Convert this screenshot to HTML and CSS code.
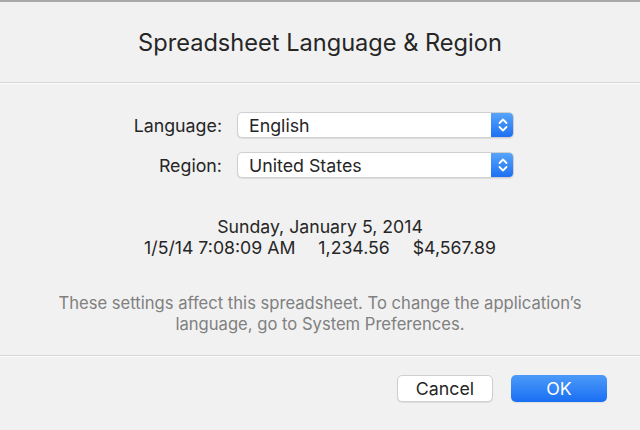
FILE: index.html
```html
<!DOCTYPE html>
<html>
<head>
<meta charset="utf-8">
<link rel="stylesheet" href="styles.css">
</head>
<body>
<div class="dialog">
  <header class="header">
    <h1 class="title">Spreadsheet Language &amp; Region</h1>
  </header>
  <main class="content">
    <div class="form">
      <label class="label">Language:</label>
      <div class="popup">
        <span class="popup-value">English</span>
        <span class="stepper">
          <svg width="12" height="18" viewBox="0 0 12 18"><path d="M2.5 7 L6 3.5 L9.5 7 M2.5 11 L6 14.5 L9.5 11" fill="none" stroke="#fff" stroke-width="1.8" stroke-linecap="round" stroke-linejoin="round"/></svg>
        </span>
      </div>
      <label class="label">Region:</label>
      <div class="popup">
        <span class="popup-value">United States</span>
        <span class="stepper">
          <svg width="12" height="18" viewBox="0 0 12 18"><path d="M2.5 7 L6 3.5 L9.5 7 M2.5 11 L6 14.5 L9.5 11" fill="none" stroke="#fff" stroke-width="1.8" stroke-linecap="round" stroke-linejoin="round"/></svg>
        </span>
      </div>
    </div>
    <div class="preview">
      <div>Sunday, January 5, 2014</div>
      <div class="preview-row"><span>1/5/14 7:08:09 AM</span><span>1,234.56</span><span>$4,567.89</span></div>
    </div>
    <p class="note">These settings affect this spreadsheet. To change the application’s language, go to System Preferences.</p>
  </main>
  <footer class="footer">
    <button class="btn">Cancel</button>
    <button class="btn btn-primary">OK</button>
  </footer>
</div>
</body>
</html>
```

FILE: styles.css
```css
html, body {
  margin: 0;
  padding: 0;
  background: #f1f1f1;
}
body {
  font-family: Inter, "Helvetica Neue", "Liberation Sans", sans-serif;
  color: #222;
  width: 640px;
  height: 430px;
  overflow: hidden;
}
.dialog {
  border-top: 2px solid #a8a8a8;
}
.header {
  height: 80px;
  display: flex;
  align-items: center;
  justify-content: center;
  border-bottom: 1px solid #d6d6d6;
  box-shadow: 0 1px 0 #fafafa;
}
.title {
  margin: 0;
  font-weight: 400;
  font-size: 23.6px;
  color: #262626;
}
.content {
  padding-top: 29px;
  border-bottom: 1px solid #d6d6d6;
  box-shadow: 0 1px 0 #fafafa;
}
.form {
  display: grid;
  grid-template-columns: 222px 277px;
  column-gap: 15px;
  row-gap: 14px;
  align-items: center;
}
.label {
  text-align: right;
  font-size: 17.8px;
  color: #262626;
}
.popup {
  height: 26px;
  box-sizing: border-box;
  background: #fff;
  border: 1px solid #cfcfcf;
  border-radius: 5px;
  box-shadow: 0 1px 1px rgba(0,0,0,0.08);
  display: flex;
  align-items: center;
  overflow: hidden;
}
.popup-value {
  flex: 1;
  padding-left: 11px;
  font-size: 17.8px;
  color: #262626;
}
.stepper {
  width: 23px;
  height: 26px;
  margin-right: -1px;
  margin-top: -1px;
  margin-bottom: -1px;
  background: linear-gradient(#5aa6fb, #1a6ef2);
  border-radius: 0 5px 5px 0;
  display: flex;
  align-items: center;
  justify-content: center;
}
.preview {
  margin-top: 38px;
  text-align: center;
  font-size: 17.7px;
  line-height: 21px;
  color: #262626;
}
.preview-row {
  display: flex;
  justify-content: center;
  gap: 23px;
}
.note {
  margin: 35px auto 0;
  padding-bottom: 20px;
  width: 570px;
  text-align: center;
  font-size: 16.6px;
  line-height: 21px;
  color: #808080;
}
.footer {
  display: flex;
  justify-content: flex-end;
  gap: 18px;
  padding: 19px 33px 0 0;
}
.btn {
  width: 96px;
  height: 27px;
  border-radius: 5px;
  border: 1px solid #cfcfcf;
  background: #fff;
  box-shadow: 0 1px 1px rgba(0,0,0,0.08);
  font-family: inherit;
  font-size: 17.8px;
  color: #262626;
  padding: 0;
}
.btn-primary {
  border: none;
  background: linear-gradient(#4c9bfa, #1a6ef2);
  color: #fff;
}
```
